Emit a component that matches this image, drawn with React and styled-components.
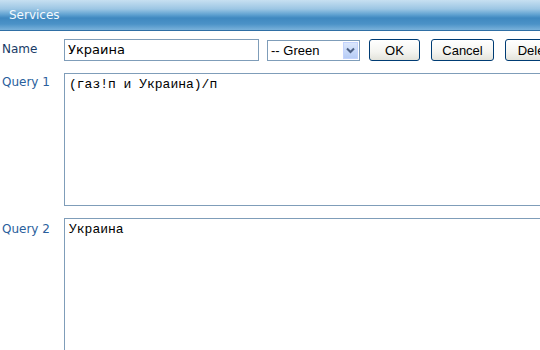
import React from "react";
import styled, { createGlobalStyle } from "styled-components";

const GlobalStyle = createGlobalStyle`
  body {
    margin: 0;
    background: #fff;
    font-family: "DejaVu Sans", Verdana, sans-serif;
    overflow: hidden;
  }
`;

const Panel = styled.div`
  width: 540px;
  height: 350px;
  overflow: hidden;
`;

const Header = styled.div`
  height: 30px;
  border-bottom: 1px solid #2f6fa5;
  background: linear-gradient(
    to bottom,
    #c7e0f1 0%,
    #9cc6e4 30%,
    #5c9fd0 50%,
    #3f88c0 60%,
    #4b92c7 80%,
    #79b1da 100%
  );
  display: flex;
  align-items: center;
  padding-left: 9px;
  color: #f4f9fd;
  font-size: 12px;
`;

const Form = styled.div`
  display: grid;
  grid-template-columns: 64px 1fr;
  row-gap: 12px;
  padding-top: 8px;
`;

const Label = styled.div`
  padding-left: 2px;
  padding-top: ${({ $top }) => $top || 2}px;
  font-size: 12px;
  color: ${({ $dark }) => ($dark ? "#173a66" : "#2a5e9c")};
`;

const Row = styled.div`
  display: flex;
  align-items: center;
  white-space: nowrap;
`;

const TextInput = styled.div`
  box-sizing: border-box;
  width: 195px;
  height: 22px;
  border: 1px solid #7f9db9;
  padding: 2px 0 0 3px;
  font-family: "DejaVu Sans", Verdana, sans-serif;
  font-size: 13px;
  color: #000;
`;

const Select = styled.div`
  box-sizing: border-box;
  margin-left: 8px;
  width: 93px;
  height: 21px;
  border: 1px solid #7f9db9;
  display: flex;
  align-items: center;
  justify-content: space-between;
  padding: 0 1px 0 3px;
  font-family: "Liberation Sans", Arial, sans-serif;
  font-size: 13px;
  color: #000;
`;

const Arrow = styled.span`
  width: 15px;
  height: 17px;
  background: linear-gradient(to bottom, #dbe7fc, #b7cdf6);
  border: 1px solid #c3d3fd;
  box-sizing: border-box;
  display: flex;
  align-items: center;
  justify-content: center;
`;

const Button = styled.div`
  box-sizing: border-box;
  margin-left: ${({ $gap }) => $gap}px;
  width: ${({ $w }) => $w}px;
  flex: none;
  height: 22px;
  border: 1px solid #003c74;
  border-radius: 3px;
  background: linear-gradient(to bottom, #ffffff 0%, #f4f4f0 60%, #e3e3db 100%);
  display: flex;
  align-items: center;
  justify-content: center;
  font-family: "Liberation Sans", Arial, sans-serif;
  font-size: 13px;
  color: #000;
`;

const Area = styled.div`
  box-sizing: border-box;
  width: 500px;
  height: 133px;
  border: 1px solid #7f9db9;
  padding: 3px 0 0 4px;
  font-family: "Liberation Mono", "Courier New", monospace;
  font-size: 13px;
  color: #000;
  white-space: pre;
`;

export default function App() {
  return (
    <Panel>
      <GlobalStyle />
      <Header>Services</Header>
      <Form>
        <Label $dark $top={3}>Name</Label>
        <Row>
          <TextInput>Украина</TextInput>
          <Select>
            -- Green
            <Arrow>
              <svg width="9" height="7" viewBox="0 0 9 7">
                <path d="M1 1.5 L4.5 5 L8 1.5" fill="none" stroke="#4d6185" strokeWidth="2" />
              </svg>
            </Arrow>
          </Select>
          <Button $gap={9} $w={51}>OK</Button>
          <Button $gap={11} $w={63}>Cancel</Button>
          <Button $gap={11} $w={63}>Delete</Button>
        </Row>
        <Label $top={2}>Query 1</Label>
        <Area>(газ!п и Украина)/п</Area>
        <Label $top={4}>Query 2</Label>
        <Area>Украина</Area>
      </Form>
    </Panel>
  );
}
